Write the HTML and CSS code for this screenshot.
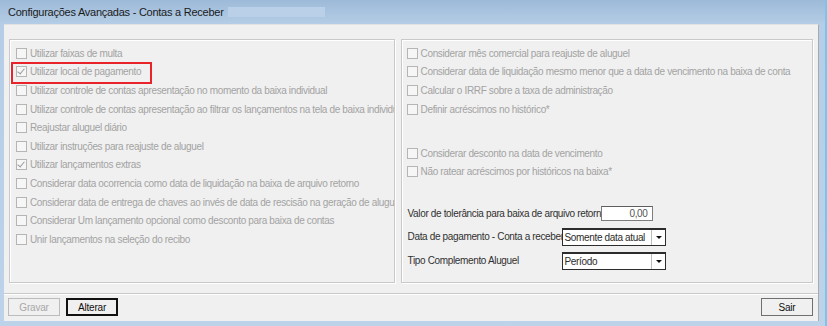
FILE: index.html
```html
<!DOCTYPE html>
<html lang="pt-BR">
<head>
    <meta charset="UTF-8">
    <title>Configurações Avançadas - Contas a Receber</title>
    <link rel="stylesheet" href="styles.css">
</head>
<body>

<div class="window">
    <div class="titlebar">
        <span class="title">Configurações Avançadas - Contas a Receber</span>
        <span class="redacted"></span>
    </div>

    <div class="body">
        <div class="panels">
            <div class="group group-left">
                <label class="check"><span class="box"></span>Utilizar faixas de multa</label>
                <label class="check highlight"><span class="box checked"></span>Utilizar local de pagamento</label>
                <label class="check"><span class="box"></span>Utilizar controle de contas apresentação no momento da baixa individual</label>
                <label class="check"><span class="box"></span>Utilizar controle de contas apresentação ao filtrar os lançamentos na tela de baixa individual</label>
                <label class="check"><span class="box"></span>Reajustar aluguel diário</label>
                <label class="check"><span class="box"></span>Utilizar instruções para reajuste de aluguel</label>
                <label class="check"><span class="box checked"></span>Utilizar lançamentos extras</label>
                <label class="check"><span class="box"></span>Considerar data ocorrencia como data de liquidação na baixa de arquivo retorno</label>
                <label class="check"><span class="box"></span>Considerar data de entrega de chaves ao invés de data de rescisão na geração de aluguel</label>
                <label class="check"><span class="box"></span>Considerar Um lançamento opcional como desconto para baixa de contas</label>
                <label class="check"><span class="box"></span>Unir lançamentos na seleção do recibo</label>
            </div>

            <div class="group group-right">
                <label class="check"><span class="box"></span>Considerar mês comercial para reajuste de aluguel</label>
                <label class="check"><span class="box"></span>Considerar data de liquidação mesmo menor que a data de vencimento na baixa de conta</label>
                <label class="check"><span class="box"></span>Calcular o IRRF sobre a taxa de administração</label>
                <label class="check"><span class="box"></span>Definir acréscimos no histórico*</label>
                <div class="spacer"></div>
                <label class="check"><span class="box"></span>Considerar desconto na data de vencimento</label>
                <label class="check"><span class="box"></span>Não ratear acréscimos por históricos na baixa*</label>

                <div class="fields">
                    <div class="field field-valor">
                        <span class="field-label wide">Valor de tolerância para baixa de arquivo retorno</span>
                        <span class="input">0,00</span>
                    </div>
                    <div class="field field-data">
                        <span class="field-label">Data de pagamento - Conta a receber</span>
                        <span class="select">Somente data atual<span class="arrow"></span></span>
                    </div>
                    <div class="field field-tipo">
                        <span class="field-label">Tipo Complemento Aluguel</span>
                        <span class="select">Período<span class="arrow"></span></span>
                    </div>
                </div>
            </div>
        </div>

        <div class="footer">
            <button class="btn" disabled>Gravar</button>
            <button class="btn default">Alterar</button>
            <span class="grow"></span>
            <button class="btn">Sair</button>
        </div>
    </div>
</div>

</body>
</html>
```

FILE: styles.css
```css
html, body {
    margin: 0;
    padding: 0;
}
body {
    width: 827px;
    height: 326px;
    overflow: hidden;
    font-family: "Liberation Sans", Arial, sans-serif;
    font-size: 10px;
    letter-spacing: -0.35px;
}
.window {
    height: 326px;
    box-sizing: border-box;
    padding: 0 6px 5px 4px;
    background: linear-gradient(to bottom, #9dbad8 0px, #b5cde6 24px, #bcd3ea 100%);
    border-right: 2px solid #79c6ec;
    display: flex;
    flex-direction: column;
}
.titlebar {
    height: 24px;
    display: flex;
    align-items: center;
    padding-left: 4px;
    flex-shrink: 0;
}
.title {
    font-size: 11px;
    letter-spacing: -0.25px;
    color: #1b1b1b;
}
.redacted {
    width: 97px;
    height: 10px;
    margin-left: 4px;
    background: #b9d0e8;
}

/* window body */
.body {
    flex: 1;
    background: #f0f0f0;
    border-top: 1px solid #e2e2e2;
    border-right: 1px solid #a9a9a9;
    display: flex;
    flex-direction: column;
}
.panels {
    display: flex;
    gap: 6px;
    padding: 14px 5px 0 5px;
    height: 244px;
}
.group {
    border: 1px solid #c9c9c9;
    box-shadow: inset 1px 1px 0 #ffffff, 1px 1px 0 #ffffff;
    box-sizing: border-box;
    height: 244px;
    display: flex;
    flex-direction: column;
    padding-top: 4px;
}
.group-left {
    width: 387px;
    padding-left: 6px;
    overflow: hidden;
}
.group-right {
    width: 414px;
    padding-left: 5px;
}

/* checkbox rows */
.check {
    height: 18.6px;
    display: flex;
    align-items: center;
    color: #a3a3a3;
    white-space: nowrap;
    position: relative;
}
.box {
    width: 9px;
    height: 9px;
    border: 1px solid #b5b5b5;
    background: #f6f6f6;
    margin-right: 3px;
    flex-shrink: 0;
    position: relative;
}
.box.checked::after {
    content: "";
    position: absolute;
    left: 2px;
    top: 0px;
    width: 3px;
    height: 6px;
    border-right: 1.5px solid #9a9a9a;
    border-bottom: 1.5px solid #9a9a9a;
    transform: rotate(40deg);
}
.highlight::before {
    content: "";
    position: absolute;
    left: -5px;
    top: -1px;
    width: 137px;
    height: 18px;
    border: 2px solid #e8232a;
}
.spacer {
    height: 25.4px;
    flex-shrink: 0;
}

/* text fields */
.fields {
    margin-top: 25px;
    color: #303030;
}
.field {
    display: flex;
    align-items: center;
    white-space: nowrap;
}
.field-data {
    margin-top: 7px;
}
.field-tipo {
    margin-top: 6px;
}
.field-label {
    width: 154px;
    overflow: hidden;
    padding-left: 1px;
}
.field-label.wide {
    width: 193px;
}
.input {
    width: 46px;
    height: 13px;
    border: 1px solid #7d7d7d;
    border-top-color: #5e5e5e;
    background: #ffffff;
    text-align: right;
    padding-right: 4px;
    line-height: 13px;
    color: #555555;
}
.select {
    width: 100px;
    height: 15px;
    border: 1px solid #2c2c2c;
    border-top-width: 2px;
    background: #ffffff;
    line-height: 15px;
    padding-left: 2px;
    position: relative;
    box-sizing: content-box;
    color: #2b2b2b;
}
.arrow {
    position: absolute;
    right: 0;
    top: 0;
    width: 13px;
    height: 15px;
    border-left: 1px solid #bdbdbd;
    background: #ffffff;
}
.arrow::after {
    content: "";
    position: absolute;
    left: 4px;
    top: 6px;
    border-left: 3px solid transparent;
    border-right: 3px solid transparent;
    border-top: 3px solid #111111;
}

/* bottom buttons */
.footer {
    margin-top: 10px;
    border-top: 1px solid #c9c9c9;
    box-shadow: inset 0 1px 0 #ffffff;
    display: flex;
    align-items: flex-start;
    gap: 6px;
    padding: 4px 5px 0 4px;
    flex: 1;
}
.grow {
    flex: 1;
}
.btn {
    width: 52px;
    height: 18px;
    font-family: inherit;
    font-size: 10px;
    letter-spacing: -0.2px;
    background: #f0f0f0;
    border: 1px solid #6f6f6f;
    padding: 0;
    color: #111111;
}
.btn:disabled {
    color: #a8a8a8;
    border-color: #bcbcbc;
}
.btn.default {
    border: 2px solid #111111;
}
```
